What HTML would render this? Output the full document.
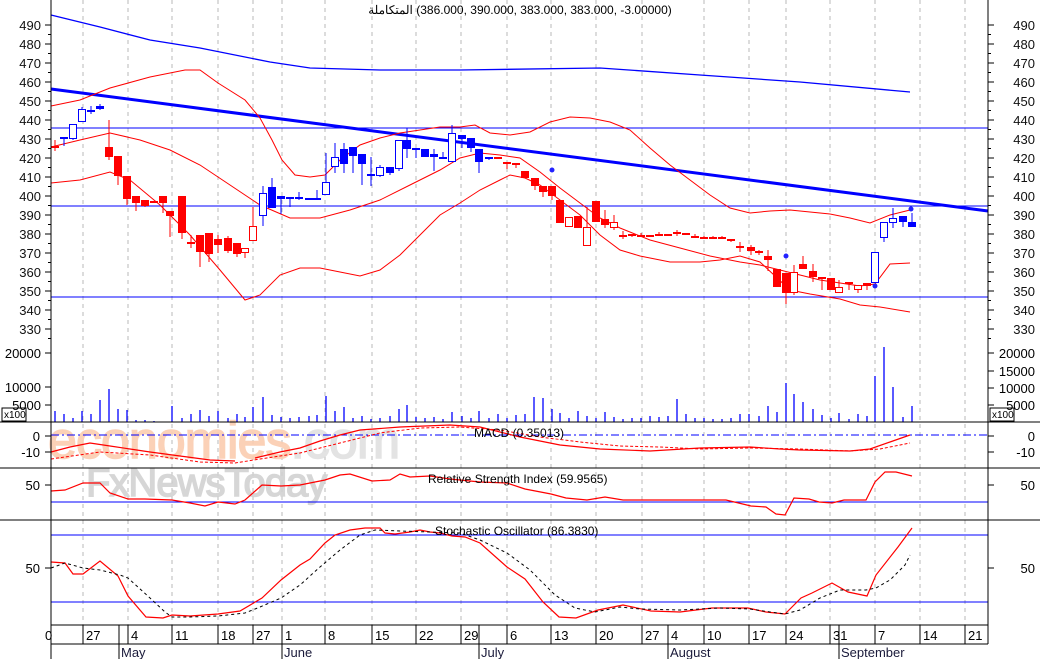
<!DOCTYPE html>
<html><head><meta charset="utf-8">
<style>
html,body{margin:0;padding:0;background:#fff;width:1040px;height:659px;overflow:hidden}
svg{display:block;font-family:"Liberation Sans","Noto Sans CJK SC",sans-serif}
</style></head>
<body>
<svg id="s" width="1040" height="659" viewBox="0 0 1040 659" xmlns="http://www.w3.org/2000/svg">
<rect width="1040" height="659" fill="#fff"/>
<g id="grid"></g>
<g id="wm">
<text x="48" y="458" font-size="52" fill="#fbcdb0" stroke="#fbcdb0" stroke-width="1.5" opacity="0.9" letter-spacing="-1">economies<tspan fill="#e0e0e0" stroke="#e0e0e0">.com</tspan></text>
<text x="86" y="496" font-size="40" fill="#d2d2d2" stroke="#d2d2d2" stroke-width="1.5" opacity="0.9" letter-spacing="-1">FxNewsToday</text>
</g>
<g id="lines" fill="none"></g>
<g id="cand"></g>
<g id="axes"></g>
<text x="520" y="14" font-size="12" text-anchor="middle" fill="#000" direction="ltr" unicode-bidi="embed">المتكاملة &#x200E;(386.000, 390.000, 383.000, 383.000, -3.00000)</text>
<text x="474" y="437" font-size="12" fill="#000">MACD (0.35013)</text>
<text x="428" y="483" font-size="12" fill="#000">Relative Strength Index (59.9565)</text>
<text x="435" y="535" font-size="12" fill="#000">Stochastic Oscillator (86.3830)</text>
</svg>
<script>
var NS="http://www.w3.org/2000/svg";
function el(p,t,a,txt){var e=document.createElementNS(NS,t);for(var k in a)e.setAttribute(k,a[k]);if(txt!==undefined)e.textContent=txt;document.getElementById(p).appendChild(e);return e;}
function L(p,x1,y1,x2,y2,c,w,d){var a={x1:x1,y1:y1,x2:x2,y2:y2,stroke:c,"stroke-width":w||1};if(d)a["stroke-dasharray"]=d;el(p,"line",a);}
function PL(pts,c,w,d){var a={points:pts.map(function(q){return q.join(",")}).join(" "),stroke:c,"stroke-width":w||1,fill:"none"};if(d)a["stroke-dasharray"]=d;el("lines","polyline",a);}
var grid=[83,128,172,218,253,282,325,372,416,461,507,551,596,642,704,749,786,830,875,920,965];
grid.forEach(function(x){L("grid",x,0,x,625,"#b8b8b8",1,"4,4");});
L("lines",51,128,988,128,"#0000ff",1);L("lines",51,206,988,206,"#0000ff",1);L("lines",51,297,988,297,"#0000ff",1);
L("lines",51,435,988,435,"#0000ff",1,"8,3,2,3");
L("lines",51,502,988,502,"#0000ff",1);
L("lines",51,535,988,535,"#0000ff",1);L("lines",51,602,988,602,"#0000ff",1);
L("lines",51,89,988,211,"#0000ff",3);
PL([[51,15],[100,27],[150,40],[200,48],[270,62],[310,68],[380,70],[460,70],[600,68],[700,75],[800,82],[910,92]],"#0000ff",1.3);
PL([[51,106],[80,100],[110,88],[150,77],[185,70],[200,70],[218,83],[245,100],[260,118],[272,140],[282,160],[295,175],[310,177],[325,175],[340,160],[360,145],[380,138],[400,133],[420,130],[440,127],[460,127],[475,125],[490,133],[510,135],[530,132],[550,122],[570,117],[590,118],[610,122],[630,130],[650,148],[670,165],[690,180],[710,195],[730,208],[750,213],[770,211],[790,210],[810,212],[830,214],[850,218],[870,223],[890,215],[910,210]],"#ff0000",1);
PL([[51,147],[80,140],[110,133],[140,140],[170,150],[200,165],[230,185],[260,205],[290,218],[320,218],[350,210],[380,200],[410,185],[440,170],[460,158],[480,153],[500,155],[520,158],[540,172],[560,188],[580,203],[600,218],[620,228],[650,240],[680,248],[710,256],[740,262],[760,265],[780,270],[800,275],[820,280],[840,283],[860,286],[875,284],[890,264],[910,263]],"#ff0000",1);
PL([[51,183],[80,180],[110,172],[130,180],[160,205],[190,235],[220,270],[245,300],[260,295],[280,275],[300,268],[320,268],[340,272],[360,276],[380,270],[400,255],[420,235],[440,215],[460,203],[480,190],[500,180],[510,175],[525,178],[540,185],[560,200],[580,215],[600,235],[620,250],[640,256],[670,262],[700,262],[720,260],[740,256],[760,262],[790,290],[810,294],[840,299],[860,305],[880,307],[910,312]],"#ff0000",1);
PL([[51,452],[70,447],[90,443],[110,446],[130,449],[150,452],[180,456],[210,460],[235,461]],"#ff0000",1.2);
PL([[255,458],[280,452],[300,448],[320,441],[340,435],[360,430],[400,427],[450,425],[480,427],[520,437],[560,445],[600,449],[650,451],[700,448],[750,447],[780,449],[800,450],[850,451],[870,449],[890,442],[910,435]],"#ff0000",1.2);
PL([[51,459],[100,452],[150,455],[200,462],[235,463],[260,459],[300,453],[340,443],[380,433],[420,428],[460,427],[500,430],[540,437],[580,442],[620,446],[660,447],[700,449],[750,448],[800,449],[850,451],[880,449],[910,443]],"#ff0000",1,"3,2");
PL([[51,491],[65,490],[83,483],[100,483],[110,493],[128,499],[145,499],[172,500],[190,503],[205,506],[218,502],[235,504],[245,500],[262,485],[281,486],[300,485],[325,480],[340,475],[350,474],[372,481],[390,480],[400,474],[410,477],[430,476],[450,479],[470,481],[480,482],[507,483],[525,489],[551,494],[566,498],[587,500],[605,497],[623,500],[669,500],[726,500],[751,506],[766,507],[776,514],[785,515],[794,498],[809,499],[819,502],[832,503],[844,500],[866,500],[875,482],[885,472],[896,472],[912,476]],"#ff0000",1.2);
PL([[51,562],[65,563],[73,574],[83,574],[100,561],[118,576],[128,596],[146,617],[163,618],[172,615],[190,616],[218,614],[240,611],[262,598],[281,580],[300,565],[310,559],[325,543],[335,535],[350,530],[365,528],[380,528],[385,533],[395,534],[410,532],[420,530],[430,532],[440,533],[452,536],[465,537],[480,543],[507,567],[525,579],[543,602],[559,617],[576,618],[598,610],[623,605],[651,611],[680,612],[712,608],[748,608],[766,612],[785,614],[801,598],[812,593],[832,583],[848,592],[867,596],[876,575],[898,547],[912,528]],"#ff0000",1.2);
PL([[51,568],[65,563],[83,568],[100,570],[120,575],[128,578],[150,598],[165,612],[172,617],[190,617],[218,616],[245,613],[260,607],[281,598],[300,585],[320,567],[340,550],[360,535],[375,530],[400,531],[430,532],[460,533],[480,540],[507,553],[530,570],[555,595],[575,608],[595,612],[620,607],[640,609],[680,610],[720,608],[750,609],[770,612],[785,614],[800,610],[820,598],[840,590],[866,590],[876,588],[890,580],[905,565],[910,555]],"#000",1,"3,3");
var C=[[55,146,148,140,151,"rh"],[64,137,139,137,146,"b"],[73,124,139,124,140,"h"],[82,109,122,107,122,"h"],[91,110,110,106,114,"b"],[100,106,109,104,110,"b"],
[109,147,157,120,160,"r"],[118,156,176,156,185,"r"],[127,176,199,176,205,"r"],[136,196,203,196,211,"r"],[145,200,206,200,207,"r"],[154,201,202,201,202,"r"],[163,196,203,196,213,"r"],
[170,211,216,211,237,"r"],[182,196,233,196,239,"r"],[191,242,243,235,248,"r"],[200,235,252,235,267,"r"],[209,233,254,233,262,"r"],[218,239,245,235,253,"r"],[228,238,251,236,253,"r"],[237,243,254,243,257,"r"],[245,248,253,248,258,"rh"],[253,226,241,207,241,"rh"],
[263,193,216,186,226,"h"],[272,187,208,178,208,"b"],[281,196,199,196,214,"b"],[290,197,199,197,207,"h"],[299,197,198,192,200,"b"],[309,198,200,198,200,"b"],[317,198,199,190,199,"b"],[326,182,195,153,195,"h"],[335,157,167,143,173,"h"],[344,149,164,143,173,"b"],[353,147,156,147,173,"b"],[362,154,164,154,185,"b"],[371,174,176,157,186,"h"],[380,167,176,165,177,"h"],[390,167,173,167,175,"b"],[399,140,169,140,171,"h"],[407,140,149,128,158,"b"],[416,148,149,148,158,"b"],[425,149,157,149,157,"b"],[434,154,157,149,171,"b"],[443,157,158,152,158,"b"],[452,133,162,125,162,"h"],[462,135,139,135,148,"b"],[471,138,148,138,152,"b"],[479,149,162,149,173,"b"],[489,157,158,157,160,"b"],
[498,157,158,157,159,"r"],[507,162,164,162,169,"r"],[516,163,164,163,168,"r"],[525,171,178,171,178,"r"],[535,178,186,178,190,"r"],[543,186,192,186,197,"r"],[552,186,196,186,200,"r"],[560,200,223,200,223,"r"],[569,217,227,217,227,"rh"],[578,216,228,216,228,"r"],[587,227,246,207,246,"rh"],[596,201,222,201,222,"r"],[605,219,225,210,228,"r"],[614,222,228,215,230,"rh"],
[623,235,237,231,239,"r"],[632,234,236,234,237,"r"],[641,235,237,233,237,"r"],[650,235,237,235,237,"r"],[659,234,236,232,236,"r"],[668,234,235,234,236,"r"],[677,232,233,230,236,"r"],[686,233,235,233,235,"r"],[695,236,237,234,238,"r"],[704,237,238,236,239,"r"],[713,237,238,236,239,"r"],[722,237,238,236,239,"r"],[731,239,241,239,242,"r"],[740,246,247,242,252,"r"],[751,247,251,245,255,"r"],[759,251,252,250,255,"r"],[768,256,260,250,271,"r"],[777,269,287,269,287,"r"],[786,273,293,273,304,"r"],[794,272,293,265,295,"rh"],[803,264,269,256,269,"r"],[813,271,277,264,282,"r"],[822,277,279,277,290,"r"],[831,278,290,278,290,"r"],[839,287,293,280,293,"rh"],[849,282,283,282,290,"r"],[858,285,290,285,293,"rh"],[867,283,286,283,290,"r"],
[875,252,283,252,283,"h"],[884,222,238,222,242,"h"],[893,218,223,208,228,"h"],[903,216,222,216,227,"b"],[912,222,227,213,227,"b"]];
C.forEach(function(c){var col=c[5][0]=="r"?"#ff0000":"#0000ff";var hol=c[5]=="rh"||c[5]=="h";
L("cand",c[0],c[3],c[0],c[4],col,1);
var h=Math.max(c[2]-c[1],1);
if(h<=2){el("cand","rect",{x:c[0]-4,y:c[1],width:8,height:2,fill:col});}
else if(hol){el("cand","rect",{x:c[0]-3.5,y:c[1]+0.5,width:7,height:h-1,fill:"#fff",stroke:col,"stroke-width":1});}
else el("cand","rect",{x:c[0]-4,y:c[1],width:8,height:h,fill:col});});
[[552,170],[786,256],[875,286],[911,209]].forEach(function(d){el("cand","circle",{cx:d[0],cy:d[1],r:2.5,fill:"#2222ff"});});
var V=[[55,411],[64,414],[73,418],[82,411],[91,414],[100,400],[109,389],[118,409],[127,410],[136,420],[145,420],[154,421],[172,406],[182,418],[191,414],[200,410],[209,416],[218,411],[228,418],[237,414],[245,417],[253,407],[263,397],[272,415],[281,417],[290,418],[299,417],[309,416],[317,415],[326,396],[335,411],[344,407],[353,418],[362,416],[371,419],[380,418],[390,416],[399,409],[407,405],[416,417],[425,418],[434,417],[443,419],[452,412],[462,416],[471,418],[479,411],[489,418],[498,414],[507,418],[516,415],[525,414],[534,397],[543,398],[552,409],[560,413],[569,418],[578,411],[587,416],[596,418],[605,412],[614,417],[623,419],[632,418],[641,418],[650,416],[659,417],[668,416],[677,399],[686,414],[695,418],[704,418],[713,419],[722,419],[731,418],[740,414],[749,414],[759,416],[768,406],[777,412],[786,383],[794,394],[803,402],[813,409],[822,415],[831,418],[839,413],[849,419],[858,414],[867,416],[875,376],[884,347],[893,387],[903,417],[912,406]];
V.forEach(function(v){L("cand",v[0],v[1],v[0],422,"#0000ff",1.3);});
var A="axes";
L(A,51,0,51,644,"#000",1);L(A,988,0,988,644,"#000",1);
[422,468,520].forEach(function(y){L(A,0,y,1040,y,"#000",1);});
L(A,51,625,988,625,"#000",1);L(A,51,644,988,644,"#000",1);
el(A,"rect",{x:2,y:408,width:24,height:13,fill:"#fff",stroke:"#000","stroke-width":1});
el(A,"text",{x:4,y:418,"font-size":10},"x100");
el(A,"rect",{x:990,y:408,width:24,height:13,fill:"#fff",stroke:"#000","stroke-width":1});
el(A,"text",{x:992,y:418,"font-size":10},"x100");
for(var p=490;p>=330;p-=10){var y=25+(490-p)*1.9;
L(A,45,y,51,y,"#000",1);L(A,988,y,994,y,"#000",1);
L(A,48,y+9.5,51,y+9.5,"#000",1);L(A,988,y+9.5,991,y+9.5,"#000",1);
el(A,"text",{x:41,y:y+5,"font-size":13,"text-anchor":"end",fill:"#111"},p);
el(A,"text",{x:1035,y:y+5,"font-size":13,"text-anchor":"end",fill:"#111"},p);}
[[20000,353],[10000,387],[5000,405]].forEach(function(v){el(A,"text",{x:41,y:v[1]+5,"font-size":13,"text-anchor":"end"},v[0]);L(A,45,v[1],51,v[1],"#000",1);});
[[20000,353],[15000,371],[10000,388],[5000,405]].forEach(function(v){el(A,"text",{x:1035,y:v[1]+5,"font-size":13,"text-anchor":"end"},v[0]);L(A,988,v[1],994,v[1],"#000",1);});
[[0,436],[-10,452]].forEach(function(v){el(A,"text",{x:40,y:v[1]+5,"font-size":13,"text-anchor":"end"},v[0]);el(A,"text",{x:1035,y:v[1]+5,"font-size":13,"text-anchor":"end"},v[0]);L(A,45,v[1],51,v[1],"#000",1);L(A,988,v[1],994,v[1],"#000",1);});
[[50,485],[50,568]].forEach(function(v){el(A,"text",{x:40,y:v[1]+5,"font-size":13,"text-anchor":"end"},v[0]);el(A,"text",{x:1035,y:v[1]+5,"font-size":13,"text-anchor":"end"},v[0]);L(A,45,v[1],51,v[1],"#000",1);L(A,988,v[1],994,v[1],"#000",1);});
var D=[[83,"27"],[128,"4"],[172,"11"],[218,"18"],[253,"27"],[282,"1"],[325,"8"],[372,"15"],[416,"22"],[461,"29"],[507,"6"],[551,"13"],[596,"20"],[642,"27"],[668,"4"],[704,"10"],[749,"17"],[786,"24"],[830,"31"],[875,"7"],[920,"14"],[965,"21"]];
D.forEach(function(d){L(A,d[0],625,d[0],644,"#000",1);el(A,"text",{x:d[0]+3,y:640,"font-size":13},d[1]);});
el(A,"text",{x:45,y:640,"font-size":13},"0");
[[119,"May"],[282,"June"],[479,"July"],[668,"August"],[839,"September"]].forEach(function(m){L(A,m[0],625,m[0],659,"#000",1);el(A,"text",{x:m[0]+2,y:657,"font-size":13,fill:"#1a1a3a"},m[1]);});
L(A,51,644,51,659,"#000",1);
</script>
</body></html>
